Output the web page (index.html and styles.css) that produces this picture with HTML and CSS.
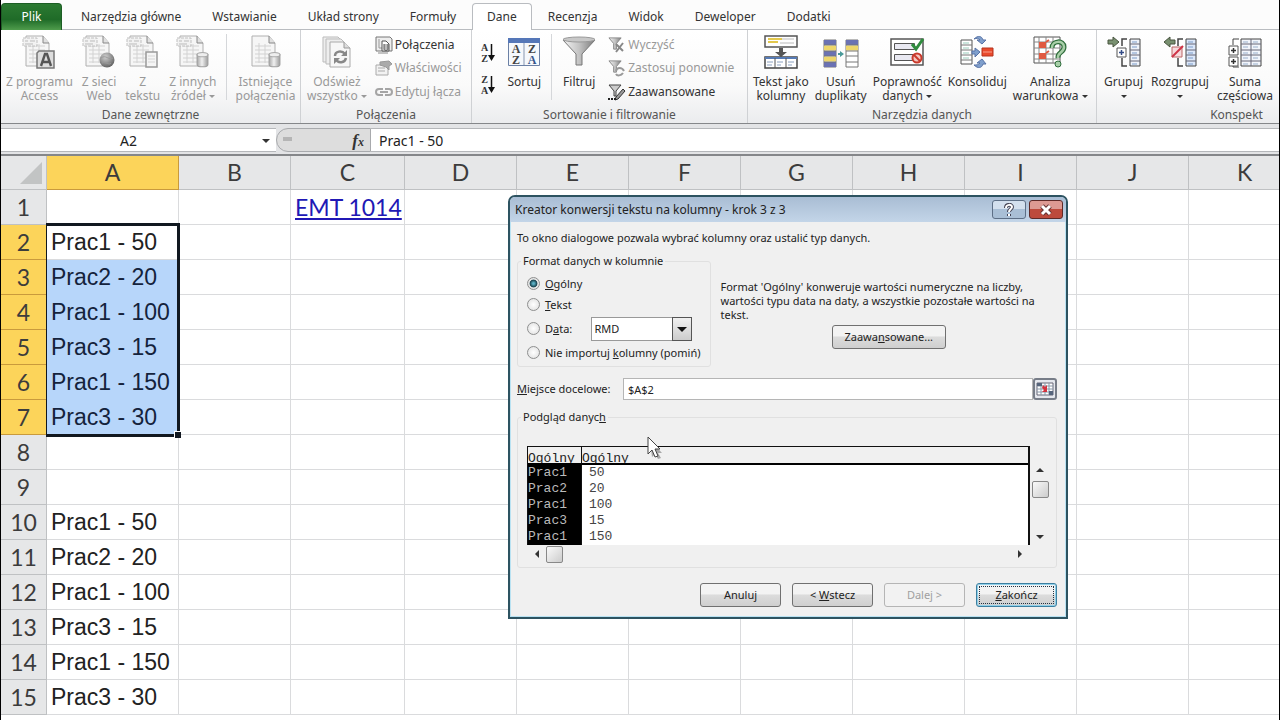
FILE: index.html
```html
<!DOCTYPE html>
<html lang="pl">
<head>
  <meta charset="UTF-8" />
  <meta name="viewport" content="width=device-width, initial-scale=1.0" />
  <title>EMT 1014</title>
  <link rel="stylesheet" href="styles.css">
</head>
<body>

  <!-- === SHARED SHAPES === -->
  <svg class="defs" width="0" height="0" aria-hidden="true">
    <defs>
      <linearGradient id="metal"><stop offset="0" stop-color="#f4f4f4"/><stop offset=".5" stop-color="#c4c4c4"/><stop offset="1" stop-color="#7c7c7c"/></linearGradient>
      <radialGradient id="ball" cx=".4" cy=".3" r=".8"><stop offset="0" stop-color="#d0d0d0"/><stop offset="1" stop-color="#555"/></radialGradient>
      <linearGradient id="can"><stop offset="0" stop-color="#a8a8a8"/><stop offset=".45" stop-color="#f0f0f0"/><stop offset="1" stop-color="#9c9c9c"/></linearGradient>
      <symbol id="doc" viewBox="0 0 34 36">
        <path d="M4 2h17l6 7v23H4z" fill="#f6f6f6" stroke="#b0b0b0"/>
        <path d="M21 2v7h6" fill="#e0e0e0" stroke="#888"/>
        <path d="M7 12h16M7 16h16M7 20h16M7 24h16M7 28h16M11 9v20M17 10v19" stroke="#d2d2d2" fill="none"/>
      </symbol>
      <symbol id="doc-tab" viewBox="0 0 34 36">
        <use href="#doc" width="34" height="36"/>
        <path d="M1 4h14v8H1z" fill="#f2f2f2" stroke="#c0c0c0" stroke-dasharray="3 1"/>
        <path d="M3 7h3M8 7h5M3 10h8" stroke="#bbb"/>
      </symbol>
      <symbol id="cylinder" viewBox="0 0 12 15">
        <path d="M1 3v9c0 3 10 3 10 0V3z" fill="url(#can)" stroke="#a0a0a0"/>
        <ellipse cx="6" cy="3" rx="5" ry="2" fill="#eee" stroke="#aaa"/>
      </symbol>
      <symbol id="small-funnel" viewBox="0 0 16 16">
        <path d="M1 2h13L9 8v6H6V8z" fill="url(#metal)" stroke="#888"/>
      </symbol>
    </defs>
  </svg>

  <!-- === TABS === -->
  <nav class="tabs">
    <button class="tab file">Plik</button>
    <button class="tab">Narzędzia główne</button>
    <button class="tab">Wstawianie</button>
    <button class="tab">Układ strony</button>
    <button class="tab">Formuły</button>
    <button class="tab active">Dane</button>
    <button class="tab">Recenzja</button>
    <button class="tab">Widok</button>
    <button class="tab">Deweloper</button>
    <button class="tab">Dodatki</button>
  </nav>

  <!-- === RIBBON === -->
  <div class="ribbon">
    <section class="group external">
      <div class="tools">
        <button class="big" disabled>
          <svg width="34" height="36" viewBox="0 0 34 36"><use href="#doc-tab" width="34" height="36"/><path d="M15 19l2-2h15v17H15z" fill="#ddd" stroke="#777" stroke-width="1.5"/><path d="M19 32l4-12h2l4 12M20.500 28h7" stroke="#555" stroke-width="2.400" fill="none"/></svg>
          <span>Z programu<br>Access</span>
        </button>
        <button class="big" disabled>
          <svg width="34" height="36" viewBox="0 0 34 36"><use href="#doc-tab" width="34" height="36"/><circle cx="25" cy="26" r="7.500" fill="url(#ball)"/><path d="M19 24c5-4 8 3 12 0M20 29c4-2 7 3 9 0" stroke="#999" fill="none"/></svg>
          <span>Z sieci<br>Web</span>
        </button>
        <button class="big" disabled>
          <svg width="34" height="36" viewBox="0 0 34 36"><use href="#doc-tab" width="34" height="36"/><path d="M20 18h11v15H20z" fill="#f5f5f5" stroke="#999" stroke-width="1.500"/><path d="M22 22h7M22 25h7M22 28h7" stroke="#d5d5d5"/></svg>
          <span>Z<br>tekstu</span>
        </button>
        <button class="big" disabled>
          <svg width="34" height="36" viewBox="0 0 34 36"><use href="#doc-tab" width="34" height="36"/><use href="#cylinder" x="20" y="17" width="13" height="17"/></svg>
          <span>Z innych<br>źródeł <i class="caret"></i></span>
        </button>
        <div class="divider"></div>
        <button class="big" disabled>
          <svg width="34" height="36" viewBox="0 0 34 36"><use href="#doc" width="34" height="36"/><use href="#cylinder" x="20" y="17" width="13" height="17"/></svg>
          <span>Istniejące<br>połączenia</span>
        </button>
      </div>
      <h2>Dane zewnętrzne</h2>
    </section>

    <section class="group connections">
      <div class="tools">
        <button class="big" disabled>
          <svg width="34" height="36" viewBox="0 0 34 36"><path d="M3 3h15l5 5v20H3z" fill="#eee" stroke="#bbb"/><path d="M6 5h15l5 5v20H6z" fill="#eee" stroke="#bbb"/><path d="M10 8h14l6 6v19H10z" fill="#f7f7f7" stroke="#aaa"/><path d="M24 8v6h6" fill="#ddd" stroke="#999"/><path d="M15 22c0-5 7-6 10-2M26 24c-1 5-8 6-10 1" fill="none" stroke="#888" stroke-width="2.500"/><path d="M27 16v6h-6zM14 30v-6h6z" fill="#888"/></svg>
          <span>Odśwież<br>wszystko <i class="caret"></i></span>
        </button>
        <div class="stack">
          <button class="small">
            <svg width="18" height="18" viewBox="0 0 18 18"><path d="M1 1h14l2 2v12H1z" fill="#eee" stroke="#777"/><path d="M4 3v9h4" stroke="#999" fill="none"/><path d="M7 5h4l3 3v7H7z" fill="#fff" stroke="#555"/><path d="M9 8v5c0 2 4 2 4 0V8" fill="#bbb" stroke="#555"/><path d="M3 17h10" stroke="#888"/></svg>
            Połączenia
          </button>
          <button class="small" disabled>
            <svg width="18" height="18" viewBox="0 0 18 18"><path d="M1 6h12v10H1z" fill="#f2f2f2" stroke="#aaa"/><path d="M3 9h7M3 12h7" stroke="#aaa"/><path d="M5 3l9-1 3 3-3 2v4l-3-3-6-2z" fill="#aaa" stroke="#999"/></svg>
            Właściwości
          </button>
          <button class="small" disabled>
            <svg width="18" height="18" viewBox="0 0 18 18"><path d="M8 6H4a3 3 0 0 0 0 6h4M10 6h4a3 3 0 0 1 0 6h-4M5 9h8" fill="none" stroke="#a5a5a5" stroke-width="2"/></svg>
            Edytuj łącza
          </button>
        </div>
      </div>
      <h2>Połączenia</h2>
    </section>

    <section class="group sorting">
      <div class="tools">
        <div class="orders">
          <button aria-label="Sortuj od A do Z"><span>A<br>Z</span><svg width="7" height="18" viewBox="0 0 7 18"><path d="M3.500 0v14" stroke="#111" stroke-width="1.500"/><path d="M0 11h7l-3.500 6z" fill="#111"/></svg></button>
          <button aria-label="Sortuj od Z do A"><span>Z<br>A</span><svg width="7" height="18" viewBox="0 0 7 18"><path d="M3.500 0v14" stroke="#111" stroke-width="1.500"/><path d="M0 11h7l-3.500 6z" fill="#111"/></svg></button>
        </div>
        <button class="big">
          <svg width="34" height="36" viewBox="0 0 34 36"><path d="M1.500 4.500h31v27h-31z" fill="#f5f8fc" stroke="#6b80a5"/><path d="M1 4h32v5H1z" fill="#5577b8"/><path d="M17 9v22" stroke="#8796b0"/><g font-family="Liberation Serif" font-weight="bold" font-size="12" text-anchor="middle" fill="#444"><text x="9" y="19">A</text><text x="9" y="30">Z</text><text x="25" y="19">Z</text><text x="25" y="30" fill="#35558c">A</text></g></svg>
          <span>Sortuj</span>
        </button>
        <div class="divider"></div>
        <button class="big">
          <svg width="34" height="36" viewBox="0 0 34 36"><path d="M1 6L14 20v11h6V20L33 6z" fill="url(#metal)" stroke="#777"/><ellipse cx="17" cy="5.500" rx="16" ry="2.500" fill="#c8c8c8" stroke="#999"/></svg>
          <span>Filtruj</span>
        </button>
        <div class="stack">
          <button class="small" disabled>
            <svg width="18" height="18" viewBox="0 0 18 18"><use href="#small-funnel" width="15" height="15"/><path d="M8 8l7 7M15 7l-7 9" stroke="#888" stroke-width="2"/></svg>
            Wyczyść
          </button>
          <button class="small" disabled>
            <svg width="18" height="18" viewBox="0 0 18 18"><use href="#small-funnel" width="15" height="15"/><path d="M8 12c1-4 6-4 8 0M15 14c-2 3-6 3-7 1" stroke="#999" stroke-width="2" fill="none"/></svg>
            Zastosuj ponownie
          </button>
          <button class="small">
            <svg width="18" height="18" viewBox="0 0 18 18"><path d="M1 2h12L8 8v5H6V8z" fill="#ccc" stroke="#444"/><path d="M8 14l7-8 2 2-7 8-3 1z" fill="#999" stroke="#333"/><path d="M0 16h8" stroke="#222" stroke-width="2" stroke-dasharray="2 1"/></svg>
            Zaawansowane
          </button>
        </div>
      </div>
      <h2>Sortowanie i filtrowanie</h2>
    </section>

    <section class="group data-tools">
      <div class="tools">
        <button class="big">
          <svg width="36" height="36" viewBox="0 0 36 36"><path d="M2 2h32v11H2z" fill="#fff" stroke="#555" stroke-width="1.500"/><path d="M5 5h14M5 8h10" stroke="#e3c84d" stroke-width="2"/><path d="M19 5h12M17 9h14" stroke="#bbb"/><path d="M16 14h4v4h4l-6 5-6-5h4z" fill="#555"/><path d="M2 23h32v11H2z" fill="#fff" stroke="#444" stroke-width="1.500"/><path d="M2 24h32" stroke="#567bb5" stroke-width="2"/><path d="M12 24v10M23 24v10" stroke="#555"/><path d="M4 28h6M14 28h6M25 28h6M4 31h5M14 31h4M25 31h4" stroke="#8aa0c0"/></svg>
          <span>Tekst jako<br>kolumny</span>
        </button>
        <button class="big">
          <svg width="36" height="36" viewBox="0 0 36 36"><path d="M1 6h12v27H1zM23 6h12v27H23z" fill="#fff" stroke="#777"/><path d="M1 6h12v5H1zM1 17h12v5H1zM1 28h12v5H1zM23 6h12v5H23z" fill="#6b72b3"/><path d="M1 11.500h12v5H1zM1 22.500h12v5H1zM23 11.500h12v5H23z" fill="#eed66b"/><path d="M1 11h12M1 17h12M1 22h12M1 28h12M23 11h12M23 17h12M23 22h12M23 28h12" stroke="#777"/><path d="M15 19h2v-2l4 3-4 3v-2h-2z" fill="#4a9a9a"/></svg>
          <span>Usuń<br>duplikaty</span>
        </button>
        <button class="big">
          <svg width="36" height="36" viewBox="0 0 36 36"><path d="M2 5h32v26H2z" fill="#fff" stroke="#555" stroke-width="1.500"/><path d="M5.500 9.500h20v6h-20zM5.500 20.500h20v6h-20z" fill="#e9e9f2" stroke="#555"/><path d="M23 10l4 5 7-10" fill="none" stroke="#2f8c3e" stroke-width="3"/><circle cx="28" cy="24" r="4.500" fill="#f6c6c0" stroke="#c93a2b" stroke-width="2"/><path d="M25 21l6 6" stroke="#c93a2b" stroke-width="2"/></svg>
          <span>Poprawność<br>danych <i class="caret"></i></span>
        </button>
        <button class="big">
          <svg width="36" height="36" viewBox="0 0 36 36"><path d="M2 6h11v24H2z" fill="#fff" stroke="#555"/><path d="M2 11h11M2 16h11M2 21h11M2 26h11" stroke="#777"/><path d="M4 9h6M4 14h6M4 19h6M4 24h6" stroke="#9cb"/><path d="M13 17h3v-3l5 4-5 5v-3h-3zM15 5c4-4 8-3 9 1h3l-4 4-5-4h3c-2-2-3-2-6-1zM15 31c4 4 8 3 9-1h3l-4-5-5 4h3c-2 2-3 2-6 2z" fill="#7f9fcc" stroke="#5873a6"/><path d="M23 14h11v8H23z" fill="#ea4a2c" stroke="#b5331d"/><path d="M24 18h9" stroke="#f6a08e"/></svg>
          <span>Konsoliduj</span>
        </button>
        <button class="big">
          <svg width="36" height="36" viewBox="0 0 36 36"><path d="M2 3h26v26H2z" fill="#fff" stroke="#555"/><path d="M7 3v26M14 3v26M21 3v26M2 8h26M2 14h26M2 20h26M2 25h26" stroke="#888"/><path d="M7 8h7v6H7zM7 19h7v6H7z" fill="#e05a42"/><path d="M14 8l3-2M14 19l3-2" stroke="#e05a42" stroke-width="2"/><path d="M20 14c0-8 12-8 12-1 0 6-7 5-6 11" fill="none" stroke="#2f6d3c" stroke-width="5"/><path d="M20 14c0-8 12-8 12-1 0 6-7 5-6 11" fill="none" stroke="#a8cfa8" stroke-width="2.500"/><circle cx="26" cy="30" r="3" fill="#a8cfa8" stroke="#2f6d3c"/></svg>
          <span>Analiza<br>warunkowa <i class="caret"></i></span>
        </button>
      </div>
      <h2>Narzędzia danych</h2>
    </section>

    <section class="group outline">
      <div class="tools">
        <button class="big">
          <svg width="36" height="36" viewBox="0 0 36 36"><path d="M2 6h5V3l6 5-6 5v-3H2z" fill="#789070" stroke="#48543f"/><path d="M21 5h-5v7M21 32h-5v-8" fill="none" stroke="#444" stroke-width="1.500"/><path d="M11 14h9v9h-9z" fill="#fff" stroke="#555"/><path d="M13 18.500h5M15.500 16v5" stroke="#334b86" stroke-width="1.500"/><path d="M24 5h10v27H24z" fill="#eef2fa" stroke="#444"/><path d="M24 10h10M24 16h10M24 21h10M24 27h10" stroke="#667"/><path d="M26 8h5M26 13h5M26 19h5M26 24h5M26 30h5" stroke="#7b9bc8"/></svg>
          <span>Grupuj<br><i class="caret"></i></span>
        </button>
        <button class="big">
          <svg width="36" height="36" viewBox="0 0 36 36"><path d="M13 6H8V3L2 8l6 5v-3h5z" fill="#789070" stroke="#48543f"/><path d="M21 5h-5v7M21 32h-5v-8" fill="none" stroke="#444" stroke-width="1.500"/><path d="M10 13h10v10H10z" fill="#f6dadd" stroke="#b66"/><path d="M10 23l11-11" stroke="#cf3346" stroke-width="2"/><path d="M24 5h10v27H24z" fill="#dce8fa" stroke="#444"/><path d="M24 10h10M24 16h10M24 21h10M24 27h10" stroke="#667"/><path d="M26 8h5M26 13h5M26 19h5M26 24h5M26 30h5" stroke="#7b9bc8"/></svg>
          <span>Rozgrupuj<br><i class="caret"></i></span>
        </button>
        <button class="big">
          <svg width="36" height="36" viewBox="0 0 36 36"><path d="M12 5H6v6M6 31v2h6" fill="none" stroke="#444"/><path d="M2 12h9v9H2zM2 23h9v9H2z" fill="#fff" stroke="#555"/><path d="M4 16.500h5M6.500 14v5M4 27.500h5M6.500 25v5" stroke="#333" stroke-width="1.500"/><path d="M14 5h20v27H14z" fill="#f2f5fb" stroke="#444"/><path d="M24 5v27M14 10h20M14 16h20M14 21h20M14 27h20" stroke="#667"/><path d="M16 8h5M26 8h5M16 13h5M26 13h5M16 19h5M26 19h5M16 24h5M26 24h5M16 30h5M26 30h5" stroke="#9ab0cc"/></svg>
          <span>Suma<br>częściowa</span>
        </button>
      </div>
      <h2>Konspekt</h2>
    </section>
  </div>

  <!-- === FORMULA BAR === -->
  <div class="formula-bar">
    <input class="name-box" aria-label="Pole nazwy" value="A2">
    <button class="name-drop" aria-label="Lista nazw"><i class="caret"></i></button>
    <div class="fx"><span class="grip"></span><button aria-label="Wstaw funkcję">f<small>x</small></button></div>
    <input class="formula" aria-label="Pasek formuły" value="Prac1 - 50">
  </div>

  <!-- === SHEET === -->
  <main class="sheet">
    <table>
      <colgroup><col class="row-col"><col class="a-col"><col class="std-col"><col class="c-col"><col span="8" class="std-col"></colgroup>
      <thead>
        <tr><th class="corner"><svg width="22" height="22" viewBox="0 0 22 22"><path d="M22 0v22H0z" fill="#c2c4c4"/></svg></th><th class="sel">A</th><th>B</th><th>C</th><th>D</th><th>E</th><th>F</th><th>G</th><th>H</th><th>I</th><th>J</th><th>K</th></tr>
      </thead>
      <tbody>
        <tr><th>1</th><td></td><td></td><td class="link"><a href="#">EMT 1014</a></td><td></td><td></td><td></td><td></td><td></td><td></td><td></td><td></td></tr>
        <tr><th class="sel">2</th><td class="first">Prac1 - 50<div class="range"></div></td><td></td><td></td><td></td><td></td><td></td><td></td><td></td><td></td><td></td><td></td></tr>
        <tr><th class="sel">3</th><td class="picked">Prac2 - 20</td><td></td><td></td><td></td><td></td><td></td><td></td><td></td><td></td><td></td><td></td></tr>
        <tr><th class="sel">4</th><td class="picked">Prac1 - 100</td><td></td><td></td><td></td><td></td><td></td><td></td><td></td><td></td><td></td><td></td></tr>
        <tr><th class="sel">5</th><td class="picked">Prac3 - 15</td><td></td><td></td><td></td><td></td><td></td><td></td><td></td><td></td><td></td><td></td></tr>
        <tr><th class="sel">6</th><td class="picked">Prac1 - 150</td><td></td><td></td><td></td><td></td><td></td><td></td><td></td><td></td><td></td><td></td></tr>
        <tr><th class="sel">7</th><td class="picked">Prac3 - 30</td><td></td><td></td><td></td><td></td><td></td><td></td><td></td><td></td><td></td><td></td></tr>
        <tr><th>8</th><td></td><td></td><td></td><td></td><td></td><td></td><td></td><td></td><td></td><td></td><td></td></tr>
        <tr><th>9</th><td></td><td></td><td></td><td></td><td></td><td></td><td></td><td></td><td></td><td></td><td></td></tr>
        <tr><th>10</th><td>Prac1 - 50</td><td></td><td></td><td></td><td></td><td></td><td></td><td></td><td></td><td></td><td></td></tr>
        <tr><th>11</th><td>Prac2 - 20</td><td></td><td></td><td></td><td></td><td></td><td></td><td></td><td></td><td></td><td></td></tr>
        <tr><th>12</th><td>Prac1 - 100</td><td></td><td></td><td></td><td></td><td></td><td></td><td></td><td></td><td></td><td></td></tr>
        <tr><th>13</th><td>Prac3 - 15</td><td></td><td></td><td></td><td></td><td></td><td></td><td></td><td></td><td></td><td></td></tr>
        <tr><th>14</th><td>Prac1 - 150</td><td></td><td></td><td></td><td></td><td></td><td></td><td></td><td></td><td></td><td></td></tr>
        <tr><th>15</th><td>Prac3 - 30</td><td></td><td></td><td></td><td></td><td></td><td></td><td></td><td></td><td></td><td></td></tr>
      </tbody>
    </table>
  </main>

  <!-- === WIZARD === -->
  <div class="dialog" role="dialog" aria-labelledby="dialog-title">
    <header>
      <h1 id="dialog-title">Kreator konwersji tekstu na kolumny - krok 3 z 3</h1>
      <button class="help" aria-label="Pomoc"><svg width="14" height="14" viewBox="0 0 14 14"><path d="M4 5c0-4 6-4 6-1 0 2-3 2-3 5M7 11v2" stroke="#445" stroke-width="4" fill="none"/><path d="M4 5c0-4 6-4 6-1 0 2-3 2-3 5M7 11v2" stroke="#fff" stroke-width="2" fill="none"/></svg></button>
      <button class="close" aria-label="Zamknij"><svg width="14" height="12" viewBox="0 0 14 12"><path d="M3 2l8 8M11 2l-8 8" stroke="#633" stroke-width="5"/><path d="M3 2l8 8M11 2l-8 8" stroke="#fff" stroke-width="3"/></svg></button>
    </header>
    <form class="wizard">
      <p>To okno dialogowe pozwala wybrać kolumny oraz ustalić typ danych.</p>
      <div class="format-row">
        <fieldset class="format">
          <legend>Format danych w kolumnie</legend>
          <label><input type="radio" name="format" checked><span><u>O</u>gólny</span></label>
          <label><input type="radio" name="format"><span><u>T</u>ekst</span></label>
          <div class="date-row">
            <label><input type="radio" name="format"><span>D<u>a</u>ta:</span></label>
            <div class="combo">
              <select aria-label="Format daty"><option>RMD</option></select>
              <i class="arrow"></i>
            </div>
          </div>
          <label><input type="radio" name="format"><span>Nie importuj <u>k</u>olumny (pomiń)</span></label>
        </fieldset>
        <div class="note">
          <p>Format 'Ogólny' konweruje wartości numeryczne na liczby, wartości typu data na daty, a wszystkie pozostałe wartości na tekst.</p>
          <button type="button" class="btn advanced">Zaawa<u>n</u>sowane...</button>
        </div>
      </div>
      <div class="target">
        <label for="target"><u>M</u>iejsce docelowe:</label>
        <input id="target" value="$A$2">
        <button type="button" aria-label="Zwiń okno"><svg width="18" height="16" viewBox="0 0 18 16"><path d="M1 2h16v12H1z" fill="#fff" stroke="#667"/><path d="M1 5h16M1 8h16M1 11h16M5 2v12M9 2v12M13 2v12" stroke="#89a"/><path d="M1 2h5v3H1zM13 10h4v4h-4z" fill="#56657c"/><path d="M7 4l2 2 2-2v7H6l2-2-2-2z" fill="#d3333f"/></svg></button>
      </div>
      <fieldset class="preview">
        <legend>Podgląd danyc<u>h</u></legend>
        <div class="preview-grid">
          <table>
            <thead><tr><th><div>Ogólny</div></th><th><div>Ogólny</div></th></tr></thead>
            <tbody>
              <tr><td>Prac1</td><td>50</td></tr>
              <tr><td>Prac2</td><td>20</td></tr>
              <tr><td>Prac1</td><td>100</td></tr>
              <tr><td>Prac3</td><td>15</td></tr>
              <tr><td>Prac1</td><td>150</td></tr>
            </tbody>
          </table>
          <div class="bar vertical"><i class="up"></i><b></b><i class="down"></i></div>
          <div class="bar horizontal"><i class="left"></i><b></b><i class="right"></i></div>
        </div>
      </fieldset>
      <footer>
        <button type="button" class="btn">Anuluj</button>
        <button type="button" class="btn">&lt; <u>W</u>stecz</button>
        <button type="button" class="btn" disabled>Dalej &gt;</button>
        <button type="button" class="btn default"><u>Z</u>akończ</button>
      </footer>
    </form>
  </div>

  <svg class="pointer" width="16" height="24" viewBox="0 0 16 24"><path d="M3 4l12 13-4 0 3 5-3 1-3-5-3 3z" fill="#888" opacity=".7"/><path d="M1 1v17l4-4 3 7 3-1-3-7h5z" fill="#fff" stroke="#444"/></svg>

</body>
</html>
```
FILE: styles.css
```css
* {
  margin: 0;
  padding: 0;
  box-sizing: border-box;
}

body {
  height: 100vh;
  overflow: hidden;
  position: relative;
  display: flex;
  flex-direction: column;
  border: solid #000;
  border-width: 0 1px;
  background: #fff;
  color: #333;
  font: 12px/14px "Noto Sans", "Open Sans", sans-serif;
}

button, input, select {
  font: inherit;
  color: inherit;
}

button {
  background: none;
  border: none;
  white-space: nowrap;
}

.defs {
  position: absolute;
}

.caret {
  display: inline-block;
  border: 3px solid transparent;
  border-top-color: currentColor;
  border-bottom: 0;
  vertical-align: middle;
}

/* === TABS === */
.tabs {
  display: flex;
  gap: 1px;
  flex: none;
  height: 30px;
  padding-top: 3px;
  background: #fcfcfc;
  border-bottom: 1px solid #b9bcc0;
}

.tab {
  height: 27px;
  padding: 0 14px;
  border: 1px solid transparent;
  border-bottom: 0;
}

.tab.file {
  width: 61px;
  margin-right: 3px;
  background: linear-gradient(#2c7a32, #1f6b28 60%, #4f9c4c);
  border-color: #1d5e25;
  border-radius: 4px 4px 0 0;
  color: #fff;
}

.tab.active {
  background: #fff;
  border-color: #b9bcc0;
  border-radius: 4px 4px 0 0;
}

/* === RIBBON === */
.ribbon {
  display: flex;
  flex: none;
  height: 94px;
  overflow: hidden;
  background: linear-gradient(#fff, #fafafa 60%, #ebecee);
  border-bottom: 1px solid #85878a;
}

.group {
  flex: none;
  display: flex;
  flex-direction: column;
  border-right: 1px solid #cfd1d4;
}

.external { width: 300px; }
.connections { width: 171px; }
.sorting { width: 276px; }
.data-tools { width: 349px; }
.outline { width: 280px; }

.group h2 {
  font-size: 12px;
  line-height: 16px;
  font-weight: normal;
  text-align: center;
  color: #555;
}

.tools {
  display: flex;
  gap: 2px;
  height: 77px;
  padding: 4px 2px 0;
}

.external .tools {
  gap: 1px;
  padding-left: 1px;
}

.data-tools .tools {
  gap: 0;
}

.outline .tools {
  padding-left: 4px;
}

.big {
  flex: none;
  display: flex;
  flex-direction: column;
  align-items: center;
  gap: 5px;
  padding: 0 4px;
}

.data-tools .big,
.outline .big {
  padding: 0 3px;
}

.big:disabled,
.small:disabled {
  color: #999;
}

.divider {
  flex: none;
  width: 1px;
  height: 66px;
  margin: 0 4px;
  background: #d5d7da;
}

.stack {
  display: flex;
  flex-direction: column;
  padding-left: 2px;
}

.sorting .stack {
  padding-left: 6px;
}

.stack .small {
  display: flex;
  align-items: center;
  gap: 2px;
  height: 24px;
}

.stack .small:first-child {
  height: 22px;
}

.orders {
  display: flex;
  flex-direction: column;
  gap: 10px;
  padding: 8px 6px 0 7px;
}

.orders button {
  display: flex;
  align-items: center;
  font: bold 10px/11px "Liberation Serif", serif;
}

/* === FORMULA BAR === */
.formula-bar {
  display: flex;
  flex: none;
  height: 32px;
  padding: 4px 0 2px;
  background: #e3e4e6;
  border-bottom: 2px solid #85878a;
}

.formula-bar input {
  border: solid #b5b7ba;
  border-width: 1px 0;
  background: #fff;
  font-size: 14px;
  color: #222;
}

.name-box {
  width: 255px;
  text-align: center;
}

.name-drop {
  width: 20px;
  background: #fff;
  border: solid #b5b7ba;
  border-width: 1px 0;
}

.name-drop .caret {
  border-width: 4px 4px 0;
}

.fx {
  display: flex;
  justify-content: space-between;
  width: 95px;
  padding: 2px 6px 0;
  background: #ddd;
  border: 1px solid #a8aaad;
  border-radius: 12px 0 0 12px;
}

.grip {
  width: 9px;
  height: 4px;
  margin-top: 6px;
  background: #b5b5b5;
}

.fx button {
  font: italic bold 17px/18px "Liberation Serif", serif;
}

.fx small {
  font-size: 12px;
}

.formula {
  flex: 1;
  min-width: 0;
  padding-left: 8px;
}

/* === SHEET === */
.sheet {
  flex: 1;
  min-height: 0;
  overflow: hidden;
}

.sheet table {
  table-layout: fixed;
  width: 1300px;
  border-collapse: separate;
  border-spacing: 0;
}

.row-col { width: 46px; }
.a-col { width: 132px; }
.c-col { width: 114px; }
.std-col { width: 112px; }

.sheet th {
  height: 35px;
  background: #e6e7e8;
  border: solid #bfc1c3;
  border-width: 0 1px 1px 0;
  font: 23px/34px Lato, sans-serif;
  color: #3c3c3c;
}

.sheet thead th {
  height: 34px;
  line-height: 33px;
}

.sheet th.sel {
  background: #fcd45a;
  border-color: #c99a3c;
}

.sheet .corner {
  text-align: right;
  padding-right: 4px;
  line-height: 0;
}

.sheet td {
  height: 35px;
  padding-left: 4px;
  border: solid #dadbdd;
  border-width: 0 1px 1px 0;
  font: 23px/34px "Liberation Sans", sans-serif;
  color: #222;
  white-space: nowrap;
}

.sheet td.link {
  font-family: Lato, sans-serif;
}

.link a {
  color: #2118b5;
}

.sheet td.picked {
  background: #b7d6fa;
  border-bottom-color: #b7d6fa;
  color: #14233c;
}

.sheet td.first {
  position: relative;
}

/* frame over A2:A7 */
.range {
  position: absolute;
  top: -2px;
  left: -1px;
  width: 134px;
  height: 214px;
  border: 3px solid #111820;
  border-left-width: 1px;
}

.range::after {
  content: "";
  position: absolute;
  right: -4px;
  bottom: -4px;
  width: 6px;
  height: 6px;
  background: #111820;
  border: solid #fff;
  border-width: 1px 0 0 1px;
}

/* === WIZARD === */
.dialog {
  position: absolute;
  top: 195px;
  left: 507px;
  width: 560px;
  background: #f0f0f0;
  border: 2px solid #2d5361;
  border-radius: 7px 7px 0 0;
  box-shadow: inset 0 0 0 1px #b9e2f2;
  font: 11px/14px "Noto Sans", "Open Sans", sans-serif;
  color: #222;
}

.dialog header {
  display: flex;
  align-items: flex-start;
  gap: 3px;
  height: 25px;
  padding: 3px 3px 0 5px;
  background: linear-gradient(#a9bdd4, #c3d5e8);
  border-radius: 5px 5px 0 0;
}

.dialog h1 {
  flex: 1;
  font-size: 12px;
  line-height: 20px;
  font-weight: normal;
}

.dialog header button {
  display: flex;
  align-items: center;
  justify-content: center;
  width: 34px;
  height: 19px;
  border: 1px solid #5d6f86;
  border-radius: 3px;
  background: linear-gradient(#d3e0ee 50%, #a9bfd6 50%);
}

.dialog header .close {
  border-color: #5f2a28;
  background: linear-gradient(#dd9a93 50%, #bd4a3c 50%);
}

.wizard {
  padding: 9px 9px 10px 7px;
}

.format-row {
  display: flex;
  gap: 10px;
  padding-top: 9px;
}

.dialog fieldset {
  border: 1px solid #e0e0e0;
  border-radius: 3px;
}

.dialog legend {
  margin-left: -6px;
  padding: 0 2px;
}

.format {
  width: 192px;
  height: 113px;
  padding: 0 9px;
}

.format label {
  display: flex;
  align-items: center;
  gap: 5px;
  height: 21px;
  white-space: nowrap;
}

.format legend + label {
  margin-top: 5px;
}

.format input {
  appearance: none;
  flex: none;
  width: 13px;
  height: 13px;
  border: 1px solid #8e8f8f;
  border-radius: 50%;
  background: radial-gradient(#fff, #ddd);
}

.format input:checked {
  background: radial-gradient(#5bb0c4 10%, #17414d 45%, #e5e5e5 55%);
}

.date-row {
  display: flex;
  align-items: center;
  justify-content: space-between;
  height: 27px;
  padding-right: 9px;
}

.combo {
  position: relative;
  width: 101px;
}

.combo select {
  appearance: none;
  display: block;
  width: 100%;
  height: 24px;
  padding-left: 3px;
  background: #fff;
  border: 1px solid #999;
}

.combo .arrow {
  position: absolute;
  top: 0;
  right: 0;
  width: 20px;
  height: 24px;
  background: linear-gradient(#f0f0f0, #ccc);
  border: 1px solid #555;
  pointer-events: none;
}

.arrow::after {
  content: "";
  position: absolute;
  top: 9px;
  left: 4px;
  border: 5px solid transparent;
  border-top-color: #111;
  border-bottom: 0;
}

.note {
  flex: 1;
  display: flex;
  flex-direction: column;
  align-items: center;
  gap: 3px;
  padding-top: 26px;
}

.btn {
  width: 81px;
  height: 24px;
  border: 1px solid #707070;
  border-radius: 3px;
  background: linear-gradient(#f3f3f3 45%, #dcdcdc 50%, #cfcfcf);
}

.btn.advanced {
  width: 114px;
}

.btn:disabled {
  background: #f2f2f2;
  border-color: #b5b5b5;
  color: #a0a0a0;
}

.btn.default {
  border-color: #3c7fa0;
  box-shadow: inset 0 0 0 1px #8fd0ea;
  outline: 1px dotted #234;
  outline-offset: -4px;
}

.target {
  display: flex;
  align-items: center;
  padding-top: 11px;
}

.target label {
  width: 106px;
}

.target input {
  flex: 1;
  min-width: 0;
  height: 22px;
  padding-left: 4px;
  background: #fff;
  border: 1px solid #b5b5b5;
}

.target button {
  display: flex;
  align-items: center;
  justify-content: center;
  width: 24px;
  height: 22px;
  background: #e5e8ee;
  border: 2px solid #777d88;
  border-radius: 3px;
}

.dialog .preview {
  margin-top: 10px;
  padding: 22px 6px 4px 9px;
}

.preview-grid {
  display: grid;
  grid-template-columns: 1fr 20px;
}

.preview table {
  width: 100%;
  table-layout: fixed;
  border-collapse: separate;
  border-spacing: 0;
  border: solid #111;
  border-width: 1px 2px 0 1px;
  background: #fff;
  font: 13px/16px "Liberation Mono", monospace;
}

.preview th {
  padding: 0;
  background: #f0f0f0;
  border-bottom: 2px solid #000;
  font-weight: normal;
  text-align: left;
}

.preview th div {
  height: 16px;
  padding-top: 4px;
  overflow: hidden;
}

.preview tr > :first-child {
  width: 54px;
  border-right: 1px solid #111;
}

.preview td {
  height: 16px;
  padding-left: 7px;
  color: #444;
}

.preview td:first-child {
  padding-left: 0;
  background: #000;
  color: #bbb;
}

.bar {
  display: flex;
  align-items: center;
}

.bar b {
  width: 17px;
  height: 17px;
  border: 1px solid #888;
  border-radius: 2px;
  background: linear-gradient(135deg, #fafafa, #ccc);
}

.bar i {
  border: 4px solid transparent;
}

.vertical {
  flex-direction: column;
  padding-top: 22px;
}

.horizontal {
  height: 18px;
  padding: 0 4px;
}

.vertical .up {
  border-top: 0;
  border-bottom-color: #333;
}

.vertical .down {
  margin: auto 0 6px;
  border-bottom: 0;
  border-top-color: #333;
}

.horizontal .left {
  border-right-color: #333;
}

.horizontal .right {
  margin-left: auto;
  border-left-color: #333;
}

.vertical b { margin-top: 9px; }
.horizontal b { margin-left: 7px; }

.wizard footer {
  display: flex;
  justify-content: flex-end;
  gap: 11px;
  padding-top: 15px;
}

.pointer {
  position: absolute;
  top: 436px;
  left: 646px;
}
```
